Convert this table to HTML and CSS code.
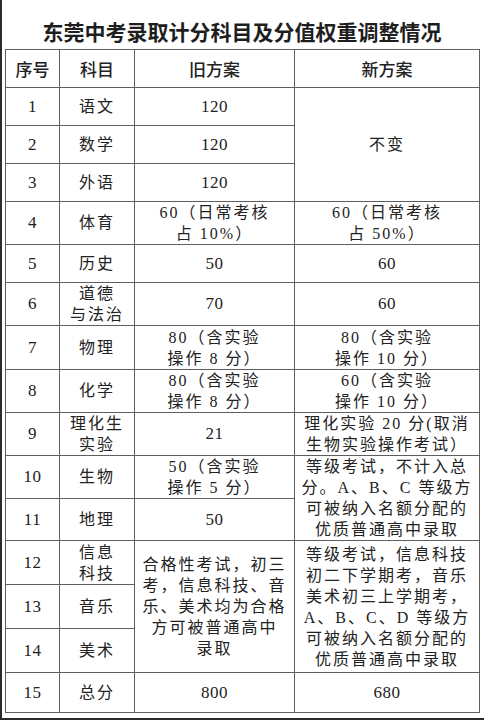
FILE: index.html
```html
<!DOCTYPE html>
<html lang="zh-CN">
<head>
<meta charset="utf-8">
<link rel="stylesheet" href="styles.css">
</head>
<body>
<div class="page">
  <h1 class="title">东莞中考录取计分科目及分值权重调整情况</h1>
  <table class="grid">
    <colgroup>
      <col class="c1"><col class="c2"><col class="c3"><col class="c4">
    </colgroup>
    <tr class="h38 head">
      <th>序号</th><th>科目</th><th>旧方案</th><th>新方案</th>
    </tr>
    <tr class="h38">
      <td class="num">1</td><td>语文</td><td class="num">120</td>
      <td rowspan="3">不变</td>
    </tr>
    <tr class="h38">
      <td class="num">2</td><td>数学</td><td class="num">120</td>
    </tr>
    <tr class="h38">
      <td class="num">3</td><td>外语</td><td class="num">120</td>
    </tr>
    <tr class="h42">
      <td class="num">4</td><td>体育</td>
      <td class="tight">60（日常考核<br>占 10%）</td>
      <td class="tight">60（日常考核<br>占 50%）</td>
    </tr>
    <tr class="h38">
      <td class="num">5</td><td>历史</td><td class="num">50</td><td class="num">60</td>
    </tr>
    <tr class="h41">
      <td class="num">6</td><td class="tight">道德<br>与法治</td><td class="num">70</td><td class="num">60</td>
    </tr>
    <tr class="h44">
      <td class="num">7</td><td>物理</td>
      <td class="tight">80（含实验<br>操作 8 分）</td>
      <td class="tight">80（含实验<br>操作 10 分）</td>
    </tr>
    <tr class="h43">
      <td class="num">8</td><td>化学</td>
      <td class="tight">80（含实验<br>操作 8 分）</td>
      <td class="tight">60（含实验<br>操作 10 分）</td>
    </tr>
    <tr class="h43">
      <td class="num">9</td><td class="tight">理化生<br>实验</td><td class="num">21</td>
      <td class="tight">理化实验 20 分(取消<br>生物实验操作考试）</td>
    </tr>
    <tr class="h43">
      <td class="num">10</td><td>生物</td>
      <td class="tight">50（含实验<br>操作 5 分）</td>
      <td rowspan="2" class="tight">等级考试，不计入总<br>分。A、B、C 等级方<br>可被纳入名额分配的<br>优质普通高中录取</td>
    </tr>
    <tr class="h42">
      <td class="num">11</td><td>地理</td><td class="num">50</td>
    </tr>
    <tr class="h44">
      <td class="num">12</td><td class="tight">信息<br>科技</td>
      <td rowspan="3" class="tight">合格性考试，初三<br>考，信息科技、音<br>乐、美术均为合格<br>方可被普通高中<br>录取</td>
      <td rowspan="3" class="tight">等级考试，信息科技<br>初二下学期考，音乐<br>美术初三上学期考，<br>A、B、C、D 等级方<br>可被纳入名额分配的<br>优质普通高中录取</td>
    </tr>
    <tr class="h44">
      <td class="num">13</td><td>音乐</td>
    </tr>
    <tr class="h44">
      <td class="num">14</td><td>美术</td>
    </tr>
    <tr class="h40">
      <td class="num">15</td><td>总分</td><td class="num">800</td><td class="num">680</td>
    </tr>
  </table>
</div>
</body>
</html>
```
FILE: styles.css
```css
html, body {
  margin: 0;
  padding: 0;
  background: #ffffff;
}
.page {
  width: 484px;
  height: 720px;
  box-sizing: border-box;
  border-left: 2px solid #2b2b2b;
  border-bottom: 2px solid #2b2b2b;
  overflow: hidden;
}
.title {
  margin: 0;
  padding-top: 18px;
  height: 26px;
  margin-bottom: 5px;
  line-height: 26px;
  text-align: center;
  font-family: "Noto Sans CJK SC", sans-serif;
  font-weight: 700;
  font-size: 21px;
  color: #1e1e1e;
  letter-spacing: 0;
  padding-right: 2px;
}
.grid {
  margin-left: 3px;
  width: 474px;
  table-layout: fixed;
  border-collapse: collapse;
  font-family: "Liberation Serif", "Noto Sans CJK SC", serif;
  font-size: 16px;
  color: #222;
  letter-spacing: 2px;
}
.c1 { width: 54px; }
.c2 { width: 75px; }
.c3 { width: 160px; }
.c4 { width: 185px; }
.grid th, .grid td {
  border: 1px solid #5e5e5e;
  padding: 0;
  text-align: center;
  vertical-align: middle;
  line-height: 20px;
}
.grid th {
  font-family: "Noto Sans CJK SC", sans-serif;
  font-weight: 500;
  font-size: 17px;
  letter-spacing: 0;
}
.grid td.num {
  font-size: 17px;
  letter-spacing: 0.5px;
}
.grid td.tight {
  line-height: 21px;
}
.h38 { height: 38px; }
.h39 { height: 39px; }
.h40 { height: 40px; }
.h41 { height: 41px; }
.h42 { height: 42px; }
.h43 { height: 43px; }
.h44 { height: 44px; }
.h45 { height: 45px; }
```
